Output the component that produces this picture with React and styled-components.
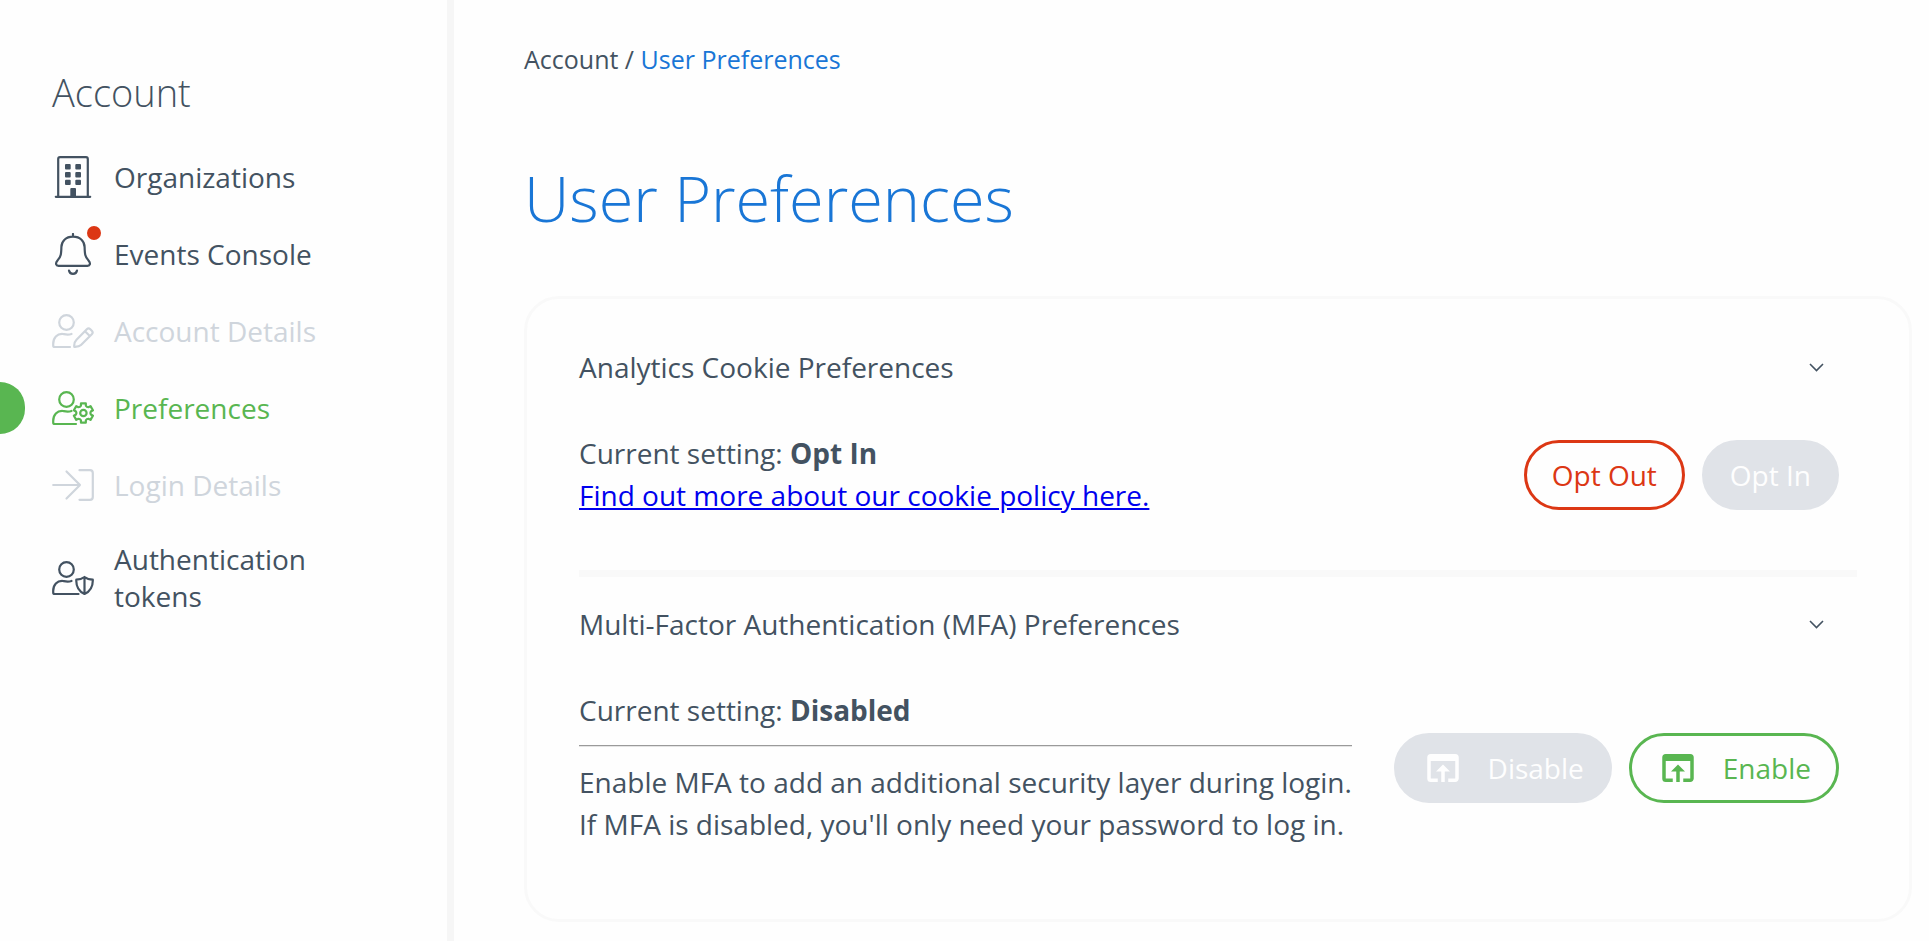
import React from "react";
import styled, { createGlobalStyle } from "styled-components";
import { MdOpenInBrowser } from "react-icons/md";

const color = {
  text: "#435261",
  muted: "#cfd5dc",
  green: "#59b651",
  blue: "#1976d6",
  red: "#dc3714",
  fill: "#e0e3e8",
  rule: "#f9f9f9",
};

const GlobalStyle = createGlobalStyle`
  * { box-sizing: border-box; }
  body {
    margin: 0;
    background: #fefefe;
    color: ${color.text};
    font: 400 28px/42px "Open Sans", sans-serif;
  }
`;

const Layout = styled.div`
  display: flex;
  min-height: 100vh;
`;

const Sidebar = styled.nav`
  flex: none;
  width: 454px;
  padding: 66px 0 0;
  border-right: 7px solid #f6f6f6;
`;

const SidebarTitle = styled.h2`
  margin: 0 0 31px 52px;
  font-size: 38px;
  font-weight: 300;
  line-height: 52px;
`;

const NavList = styled.ul`
  display: flex;
  flex-direction: column;
  gap: 21px;
  margin: 0;
  padding: 0;
  list-style: none;
`;

const NavItem = styled.li`
  padding-top: ${(p) => (p.$tall ? 7 : 0)}px;
`;

const NavLink = styled.a`
  position: relative;
  display: flex;
  align-items: center;
  gap: 20px;
  min-height: 56px;
  padding: 0 100px 0 52px;
  line-height: 37px;
  text-decoration: none;
  color: ${(p) => (p.$active ? color.green : p.$muted ? color.muted : color.text)};

  ${(p) =>
    p.$active &&
    `&::before {
      content: "";
      position: absolute;
      left: 0;
      top: 2px;
      width: 25px;
      height: 52px;
      border-radius: 0 26px 26px 0;
      background: ${color.green};
    }`}
`;

const IconBox = styled.span`
  position: relative;
  flex: none;
  width: 42px;
  height: 42px;

  svg {
    display: block;
  }
`;

const Badge = styled.span`
  position: absolute;
  top: -7px;
  right: -7px;
  width: 14px;
  height: 14px;
  border-radius: 50%;
  background: ${color.red};
`;

const Main = styled.main`
  flex: 1;
  min-width: 0;
  padding: 42px 17px 19px 70px;
`;

const Breadcrumb = styled.nav`
  font-size: 25px;
  line-height: 34px;

  a {
    color: ${color.blue};
    text-decoration: none;
  }
`;

const PageTitle = styled.h1`
  margin: 79px 0 55px;
  font-size: 63px;
  font-weight: 300;
  line-height: 86px;
  color: ${color.blue};
`;

const Card = styled.div`
  padding: 47px 52px 74px;
  border: 3px solid ${color.rule};
  border-radius: 35px;
`;

const Divider = styled.div`
  height: 7px;
  margin: 54px 0 26px;
  background: ${color.rule};
`;

const SectionHeader = styled.div`
  display: flex;
  align-items: center;
  justify-content: space-between;
  margin-bottom: 44px;
  padding-right: 24px;
`;

const SectionTitle = styled.h3`
  margin: 0;
  font-size: 28px;
  font-weight: 400;
`;

const ToggleButton = styled.button`
  display: flex;
  padding: 9px;
  border: 0;
  background: none;
  color: inherit;
`;

const SettingRow = styled.div`
  display: flex;
  align-items: center;
  justify-content: space-between;
  gap: 28px;
  padding-right: 18px;
`;

const Setting = styled.div`
  p {
    margin: 0;
  }

  a {
    color: #0000ee;
  }

  hr {
    margin: 14px 0;
    border: 0;
    border-top: 1px solid #9a9a9a;
    border-bottom: 1px solid #e4e4e4;
  }
`;

const Actions = styled.div`
  display: flex;
  flex: none;
  gap: 17px;
  padding-top: 2px;
`;

const PillButton = styled.button`
  display: flex;
  align-items: center;
  gap: 24px;
  height: 70px;
  padding: 0 25px;
  border: 3px solid ${(p) => p.$tone};
  border-radius: 35px;
  background: transparent;
  color: ${(p) => p.$tone};
  font: inherit;

  &:disabled {
    border-color: ${color.fill};
    background: ${color.fill};
    color: #fefefe;
  }
`;

const Line = ({ children }) => (
  <svg width="42" height="42" viewBox="0 0 42 42" fill="none" stroke="currentColor" strokeWidth="2.2" strokeLinecap="round" strokeLinejoin="round" aria-hidden="true">
    {children}
  </svg>
);

const Person = ({ end }) => (
  <>
    <circle cx="14.5" cy="12.5" r="7.3" />
    <path d={`M19.500 24 C16 25.200 14 24.600 11 24 C5 23.500 1.200 28 1.200 34 V35.500 Q1.200 37 2.700 37 H${end}`} />
  </>
);

const Building = () => (
  <Line>
    <path d="M6.200 40 V3 Q6.200 1.200 8 1.200 H34 Q35.800 1.200 35.800 3 V40 M3.800 40.800 H38.200" />
    <g fill="currentColor" stroke="none">
      {[8, 16, 23.7].map((y) => (
        <React.Fragment key={y}>
          <rect x="13" y={y} width="5.7" height="5.4" rx="1" />
          <rect x="23.3" y={y} width="5.7" height="5.4" rx="1" />
        </React.Fragment>
      ))}
      <path d="M18.300 41 V33 Q18.300 32 19.300 32 H23 Q24 32 24 33 V41Z" />
    </g>
  </Line>
);

const Bell = () => (
  <Line>
    <path d="M21 1 V3 M21 3.700 C13.500 3.700 9.600 8.500 9.400 14 C9.200 21 9 24 5.500 27.500 C3 30.500 4 32.900 6.500 32.900 H35.500 C38 32.900 39 30.500 36.500 27.500 C33 24 32.800 21 32.600 14 C32.400 8.500 28.500 3.700 21 3.700Z M17 37.500 C17.800 42 24.200 42 25 37.500" />
  </Line>
);

const PersonEdit = () => (
  <Line>
    <Person end={18} />
    <path d="M22.300 36.800 Q21.800 32.500 24.500 29.800 L34.800 19.200 Q36.500 17.500 38.300 19.200 L39.800 20.700 Q41.500 22.500 39.800 24.200 L29 35 Q27 37 22.300 36.800Z M33 21.200 L37.800 26" />
  </Line>
);

const gearPath = (() => {
  const at = (radius, degrees) => {
    const a = (degrees * Math.PI) / 180;
    return `${(31.4 + radius * Math.sin(a)).toFixed(2)} ${(26 - radius * Math.cos(a)).toFixed(2)}`;
  };
  return [0, 60, 120, 180, 240, 300]
    .map((t) => `${t ? "L" : "M"}${at(7.6, t - 19)} L${at(9.9, t - 14)} L${at(9.9, t + 14)} L${at(7.6, t + 19)} Q${at(6.6, t + 30)} ${at(7.6, t + 41)}`)
    .join(" ")
    .concat("Z");
})();

const PersonGear = () => (
  <Line>
    <Person end={24} />
    <circle cx="31.4" cy="26" r="3.2" />
    <path d={gearPath} />
  </Line>
);

const Login = () => (
  <Line>
    <path d="M1.200 21 H28 M14.500 7.500 L28 21 L14.500 34.500 M27.500 6.200 H38 Q40.800 6.200 40.800 9 V33 Q40.800 35.800 38 35.800 H27.500" />
  </Line>
);

const PersonShield = () => (
  <Line>
    <Person end={26.5} />
    <path d="M32.500 20 C30 22 27 22.700 24.300 22.700 C24 29 26 34 32.500 37 C39 34 41 29 40.800 22.700 C38 22.700 35 22 32.500 20Z V37" />
  </Line>
);

const Chevron = () => (
  <svg width="15" height="9" viewBox="0 0 15 9" fill="none" stroke="currentColor" strokeWidth="1.6" aria-hidden="true">
    <path d="M1 1 L7.500 7.500 L14 1" />
  </svg>
);

const items = [
  { label: "Organizations", Icon: Building },
  { label: "Events Console", Icon: Bell, badge: true },
  { label: "Account Details", Icon: PersonEdit, muted: true },
  { label: "Preferences", Icon: PersonGear, active: true },
  { label: "Login Details", Icon: Login, muted: true },
  { label: "Authentication tokens", Icon: PersonShield, tall: true },
];

const Section = ({ title, actions, children }) => (
  <section>
    <SectionHeader>
      <SectionTitle>{title}</SectionTitle>
      <ToggleButton aria-label={`Toggle ${title}`}>
        <Chevron />
      </ToggleButton>
    </SectionHeader>
    <SettingRow>
      <Setting>{children}</Setting>
      <Actions>{actions}</Actions>
    </SettingRow>
  </section>
);

export default function App() {
  return (
    <>
      <GlobalStyle />
      <Layout>
        <Sidebar aria-label="Account">
          <SidebarTitle>Account</SidebarTitle>
          <NavList>
            {items.map(({ label, Icon, badge, muted, active, tall }) => (
              <NavItem $tall={tall} key={label}>
                <NavLink href="#" $muted={muted} $active={active} aria-current={active ? "page" : undefined}>
                  <IconBox>
                    <Icon />
                    {badge && <Badge />}
                  </IconBox>
                  {label}
                </NavLink>
              </NavItem>
            ))}
          </NavList>
        </Sidebar>
        <Main>
          <Breadcrumb aria-label="Breadcrumb">
            Account / <a href="#">User Preferences</a>
          </Breadcrumb>
          <PageTitle>User Preferences</PageTitle>
          <Card>
            <Section
              title="Analytics Cookie Preferences"
              actions={
                <>
                  <PillButton $tone={color.red}>Opt Out</PillButton>
                  <PillButton disabled>Opt In</PillButton>
                </>
              }
            >
              <p>
                Current setting: <strong>Opt In</strong>
              </p>
              <p>
                <a href="#">Find out more about our cookie policy here.</a>
              </p>
            </Section>
            <Divider />
            <Section
              title="Multi-Factor Authentication (MFA) Preferences"
              actions={
                <>
                  <PillButton disabled>
                    <MdOpenInBrowser size={42} />
                    Disable
                  </PillButton>
                  <PillButton $tone={color.green}>
                    <MdOpenInBrowser size={42} />
                    Enable
                  </PillButton>
                </>
              }
            >
              <p>
                Current setting: <strong>Disabled</strong>
              </p>
              <hr />
              <p>
                Enable MFA to add an additional security layer during login.
                <br />
                If MFA is disabled, you'll only need your password to log in.
              </p>
            </Section>
          </Card>
        </Main>
      </Layout>
    </>
  );
}
